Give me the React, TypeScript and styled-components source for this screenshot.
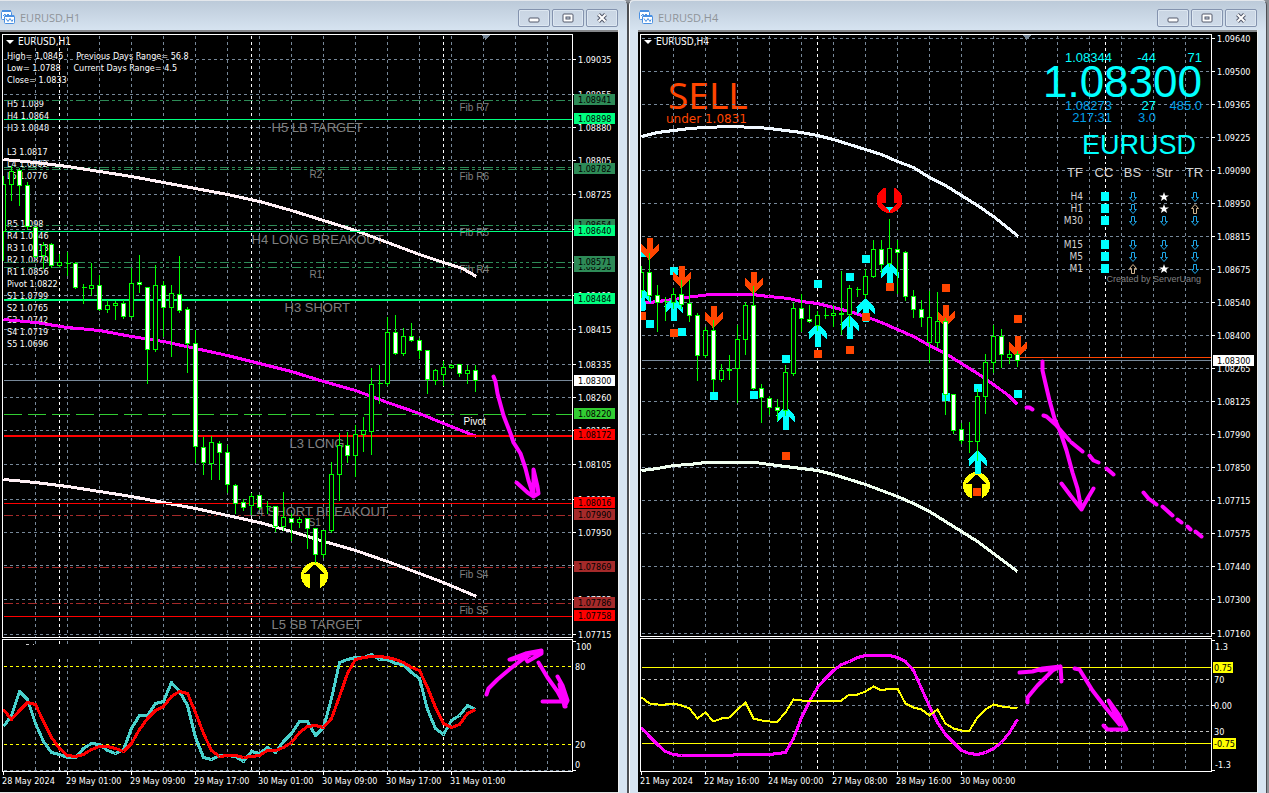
import React from 'react';
import styled, { createGlobalStyle } from 'styled-components';

const GlobalStyle = createGlobalStyle`
  *, *::before, *::after { box-sizing: border-box; }
  body { margin: 0; background: #8d9096; }
`;

const UI_FONT = '"DejaVu Sans Condensed", "DejaVu Sans", sans-serif';
const ARIAL = '"Liberation Sans", Arial, sans-serif';

const GRID = '#778899';
const MAGENTA = '#ff00ff';
const CYAN = '#00ffff';
const ORANGE = '#ff4500';
const SEA = '#2e8b57';
const SPRING = '#00ff7f';
const BROWN = '#a52a2a';
const LIME = '#00ff00';

/* ---------- layout ---------- */

const Desktop = styled.main`
  display: grid;
  grid-template-columns: 628fr 641fr;
  align-items: stretch;
  min-height: 100vh;
  font-family: ${UI_FONT};
`;

const Win = styled.section<{ $first?: boolean }>`
  min-width: 0;
  display: flex;
  flex-direction: column;
  background: #d7e4f1 linear-gradient(#bccad9, #d7e4f1 30px) no-repeat;
  border-top: 1px solid #e3e7ec;
  border-right: 1px solid #4c4e52;
  border-left: ${(p) => (p.$first ? '0' : '1px solid #4c4e52')};
  border-radius: ${(p) => (p.$first ? '0 5px 0 0' : '5px 5px 0 0')};
  padding-right: 9px;
  padding-left: ${(p) => (p.$first ? '0' : '9px')};
  box-shadow: ${(p) => (p.$first ? 'none' : 'inset 1px 0 0 #ffffff')};
  margin-right: ${(p) => (p.$first ? '0' : '2px')};
`;

const TitleBar = styled.header`
  display: flex;
  align-items: center;
  gap: 5px;
  height: 29px;
  padding: 4px 0 0 1px;
`;

const Title = styled.h1`
  flex: 1;
  margin: 0;
  font: 400 11px/16px "Open Sans", "Noto Sans", sans-serif;
  color: #8f9499;
`;

const WinButtons = styled.div`
  display: flex;
  gap: 2px;
`;

const WinButton = styled.button`
  width: 32px;
  height: 18px;
  padding: 0;
  display: grid;
  place-items: center;
  border: 1px solid #8493ae;
  border-radius: 2px;
  background: linear-gradient(#c9d5e3, #cfdbe9);
  box-shadow: inset 0 0 0 1px #dde7f1;
`;

const Client = styled.div`
  display: flex;
  flex-direction: column;
  flex: 1;
  background: #000;
  border-top: 2px solid #85878a;
  padding: 2px 0 0 2px;
  box-shadow: 1px 0 0 #f0f0f0;
  border-bottom: 1px solid #e6e6e6;
`;

const Pane = styled.div`
  display: flex;
  & + & { margin-top: 1px; }
`;

const Frame = styled.div`
  position: relative;
  flex: 1;
  min-width: 0;
  overflow: hidden;
  border: 1px solid #fff;
`;

const Drawing = styled.svg`
  position: relative;
  display: block;
  width: 100%;
`;

const AxisDrawing = styled.svg`
  display: block;
  flex: none;
  width: 45px;
  overflow: visible;
  font: 9px ${UI_FONT};
`;

const TimeAxis = styled.ol`
  display: flex;
  height: 20px;
  margin: 0;
  padding: 0;
  list-style: none;
  overflow: hidden;
  color: #fff;
  font-size: 9px;
  line-height: 12px;
`;

const TimeLabel = styled.li`
  flex: none;
  width: 64px;
  white-space: nowrap;
  &::before {
    content: '';
    display: block;
    width: 1px;
    height: 3px;
    margin-left: 1px;
    background: #fff;
  }
`;

/* ---------- overlays ---------- */

const InfoLayer = styled.div`
  position: absolute;
  top: 1px;
  left: 3px;
  color: #fff;
`;

const SymbolLine = styled.h2`
  display: flex;
  align-items: center;
  gap: 4px;
  margin: 0;
  font-size: 10px;
  line-height: 12px;
  font-weight: 400;
`;

const Caret = styled.span`
  border: 4px solid transparent;
  border-top-color: #fff;
  border-bottom: 0;
`;

const Readout = styled.pre`
  margin: 2px 0 0 1px;
  font: 9px/12px ${UI_FONT};
`;

const Signal = styled.div`
  margin: 29px 0 0 22px;
  color: ${ORANGE};
`;

const SignalWord = styled.div`
  padding-left: 2px;
  font: 37px/36px "Noto Sans", "Open Sans", sans-serif;
`;

const SignalNote = styled.div`
  font: 12px/12px "DejaVu Sans", sans-serif;
`;

const Dashboard = styled.aside`
  position: absolute;
  top: 17px;
  right: 4px;
  display: flex;
  flex-direction: column;
  align-items: flex-end;
  font-family: ${ARIAL};
  color: ${CYAN};
`;

const Quotes = styled.div<{ $color: string }>`
  display: grid;
  grid-template-columns: 49px 44px 46px;
  margin-right: 5px;
  text-align: right;
  font-size: 13px;
  line-height: 12px;
  color: ${(p) => p.$color};
`;

const Bright = styled.span`
  color: ${CYAN};
`;

const BigPrice = styled.div`
  margin-right: 5px;
  font-size: 44px;
  line-height: 36px;
`;

const Pair = styled.div`
  margin: 3px 11px 2px 0;
  font-size: 27px;
  line-height: 36px;
`;

const Matrix = styled.table`
  table-layout: fixed;
  width: 150px;
  border-collapse: collapse;
  color: #d3d3d3;
  text-align: center;
`;

const HeadCell = styled.th<{ $w: number; $label?: boolean }>`
  width: ${(p) => p.$w}px;
  height: 26px;
  padding: 0 ${(p) => (p.$label ? 6 : 0)}px 0 0;
  vertical-align: top;
  font-weight: 400;
  font-size: 13px;
  line-height: 16px;
  text-align: ${(p) => (p.$label ? 'right' : 'center')};
`;

const FrameName = styled.th`
  height: 12px;
  padding: 0 6px 0 0;
  font: 400 10px/12px ${UI_FONT};
  text-align: right;
`;

const MarkCell = styled.td`
  height: 12px;
  padding: 0;
  line-height: 0;
`;

const Credit = styled.div`
  margin-right: 6px;
  font-size: 9px;
  line-height: 8px;
  color: #808080;
`;

/* ---------- small drawings ---------- */

const ChartIcon = () => (
  <svg width="14" height="15" viewBox="0 0 14 15" aria-hidden="true">
    <g fill="#fff" stroke="#4a90e2">
      <rect x="0.5" y="1.5" width="10" height="8" rx="1" />
      <path d="M1 1h9" strokeWidth="2" />
      <path d="M2 6l2-2 1 2 2-2 1 1" fill="none" />
      <rect x="3.5" y="5.5" width="10" height="8" rx="1" />
      <path d="M4 6h9" strokeWidth="2" />
      <path d="M5 8.5l2 3 2-3 2 3 1-2" fill="none" />
    </g>
  </svg>
);

const glyphs = {
  Minimize: <rect x="1" y="5" width="10" height="4" rx="1" fill="#fff" stroke="#53586a" />,
  Restore: (
    <g fill="#fff" stroke="#53586a">
      <rect x="1" y="1" width="10" height="8" rx="1" />
      <rect x="4" y="4" width="4" height="2" fill="#cfdbe9" />
    </g>
  ),
  Close: (
    <g fill="none">
      <path d="M2.5 1.5l7 7m0-7l-7 7" stroke="#53586a" strokeWidth="4" />
      <path d="M2.5 1.5l7 7m0-7l-7 7" stroke="#fff" strokeWidth="2" />
    </g>
  ),
};

const HollowArrow = ({ up }: { up?: boolean }) => (
  <svg width="8" height="12" viewBox="0 0 8 12" aria-label={up ? 'up' : 'down'}>
    <path
      d="M2.5 1.5h3v5h2L4 10.500.500 6.500h2z"
      fill="#000"
      stroke={up ? '#d2b48c' : '#1ea7e8'}
      transform={up ? 'rotate(180 4 6)' : undefined}
    />
  </svg>
);

const Star = () => (
  <svg width="10" height="12" viewBox="0 0 10 12" aria-label="strong">
    <path d="M5 1l1.200 3.400H10L7 6.600 8.100 10 5 7.900 1.900 10 3 6.600 0 4.400h3.800z" fill="#fff" />
  </svg>
);

const Block = () => (
  <svg width="10" height="12" viewBox="0 0 10 12" aria-label="cyan">
    <rect x="2" y="1" width="8" height="9" fill={CYAN} />
  </svg>
);

/* ---------- chart parts; coordinates are whole pixels of the desktop ---------- */

type Pt = [number, number];
const pts = (list: Pt[]) => list.map((p) => p.join(',')).join(' ');
const series = (x0: number, ys: number[]): Pt[] => ys.map((y, i) => [x0 + 8 * i, y]);
const range = (from: number, to: number, step: number) => {
  const out: number[] = [];
  for (let v = from; v <= to; v += step) out.push(v);
  return out;
};

const Canvas = ({
  x,
  y,
  height,
  label,
  children,
}: {
  x: number;
  y: number;
  height: number;
  label: string;
  children: React.ReactNode;
}) => (
  <Drawing height={height} role="img" aria-label={label}>
    <g transform={`translate(${0.5 - x} ${0.5 - y})`} shapeRendering="crispEdges">
      {children}
    </g>
  </Drawing>
);

const VLines = ({ xs, y1, y2, color = GRID }: { xs: number[]; y1: number; y2: number; color?: string }) => (
  <g stroke={color} strokeDasharray="3 3">
    {xs.map((x) => (
      <line key={x} x1={x} x2={x} y1={y1} y2={y2} />
    ))}
  </g>
);

const HLine = ({
  y,
  x = 3,
  color = GRID,
  dash,
  width = 1,
}: {
  y: number;
  x?: number;
  color?: string;
  dash?: string;
  width?: number;
}) => <line x1={x} x2={4000} y1={y} y2={y} stroke={color} strokeDasharray={dash} strokeWidth={width} />;

const Line = ({ data, color, width = 3 }: { data: Pt[]; color: string; width?: number }) => (
  <polyline points={pts(data)} fill="none" stroke={color} strokeWidth={width} strokeLinejoin="round" />
);

const Marker = ({ d }: { d: string }) => (
  <path
    d={d}
    fill="none"
    stroke={MAGENTA}
    strokeWidth="4"
    strokeLinecap="round"
    strokeLinejoin="round"
    shapeRendering="auto"
  />
);

/* high, body top, body bottom, low, filled (1) or hollow (0) */
type Bar = [number, number, number, number, 0 | 1];

const Candles = ({ x0, bars }: { x0: number; bars: Bar[] }) => (
  <g stroke={LIME}>
    {bars.map(([h, t, b, l, f], i) => {
      const x = x0 + 8 * i;
      return (
        <g key={x}>
          <line x1={x} x2={x} y1={h} y2={l} />
          {b - t < 1 ? (
            <line x1={x - 2} x2={x + 3} y1={t} y2={t} />
          ) : (
            <rect x={x - 2} y={t} width="4" height={b - t} fill={f ? '#fff' : '#000'} />
          )}
        </g>
      );
    })}
  </g>
);

const Tag = ({ y, text, bg, fg = '#000', x = 1, w = 41, tx = 5 }: {
  y: number; text: string; bg: string; fg?: string; x?: number; w?: number; tx?: number;
}) => (
  <g>
    <rect x={x} y={y - 5} width={w} height="11" fill={bg} />
    <text x={tx} y={y + 4} fill={fg}>{text}</text>
  </g>
);

const Scale = ({ top, rows, x = 5 }: { top: number; rows: [number, string][]; x?: number }) => (
  <g>
    {rows.map(([y, text]) => (
      <g key={y}>
        <rect x="0" y={y - top} width="3" height="1" fill="#fff" />
        <text x={x} y={y - top + 4} fill="#fff">{text}</text>
      </g>
    ))}
  </g>
);

/* ---------- H1 data ---------- */

const h1Cols = range(35, 2000, 32);
const h1Days = [59, 251, 443];

const h1Scale: [number, string][] = [
  [59, '1.09035'], [94, '1.08955'], [127, '1.08880'], [160, '1.08805'], [194, '1.08725'],
  [229, '1.08645'], [262, '1.08570'], [295, '1.08490'], [329, '1.08415'], [364, '1.08335'],
  [397, '1.08260'], [430, '1.08185'], [464, '1.08105'], [499, '1.08025'], [532, '1.07950'],
  [565, '1.07875'], [599, '1.07795'], [634, '1.07715'],
];

const h1Tags: [number, string, string][] = [
  [99, '1.08941', SEA], [118, '1.08898', SPRING], [168, '1.08786', SEA], [168, '1.08782', SEA],
  [224, '1.08654', SEA], [230, '1.08640', SPRING], [266, '1.08558', SEA], [261, '1.08571', SEA],
  [298, '1.08484', SPRING], [380, '1.08300', '#fff'], [413, '1.08220', '#32cd32'],
  [434, '1.08172', '#ff0000'], [502, '1.08016', '#ff0000'], [514, '1.07990', BROWN],
  [566, '1.07869', BROWN], [602, '1.07786', BROWN], [615, '1.07758', '#ff0000'],
];

const h1Names: [number, number, string, number][] = [
  [459, 110, 'Fib R7', 10], [459, 179, 'Fib R6', 10], [459, 235, 'Fib R5', 10], [459, 272, 'Fib R4', 10],
  [309, 177, 'R2', 10], [309, 277, 'R1', 10], [308, 525, 'S1', 10], [459, 577, 'Fib S4', 10],
  [459, 613, 'Fib S5', 10], [271, 131, 'H5 LB TARGET', 13], [251, 243, 'H4 LONG BREAKOUT', 13],
  [284, 311, 'H3 SHORT', 13], [289, 447, 'L3 LONG', 13], [249, 515, 'L4 SHORT BREAKOUT', 13],
  [271, 628, 'L5 SB TARGET', 13],
];

const h1Upper: Pt[] = [
  [3, 159], [35, 162], [67, 166], [99, 171], [131, 176], [163, 182], [195, 188], [227, 194], [259, 201],
  [291, 210], [323, 220], [355, 230], [387, 242], [419, 254], [443, 262], [462, 268], [476, 276],
];
const h1Middle: Pt[] = [
  [3, 319], [35, 322], [67, 327], [99, 330], [131, 336], [163, 341], [195, 348], [227, 355], [259, 363],
  [291, 371], [323, 381], [355, 390], [387, 402], [419, 413], [443, 423], [476, 436],
];
const h1Lower: Pt[] = [
  [3, 479], [35, 482], [67, 486], [99, 491], [131, 496], [163, 502], [195, 508], [227, 515], [259, 522],
  [291, 531], [317, 539], [355, 550], [387, 561], [419, 573], [443, 582], [476, 596],
];

const h1Bars: Bar[] = [
  [175, 184, 231, 260, 0], [165, 171, 184, 200, 0], [167, 170, 185, 205, 1], [181, 185, 226, 229, 1],
  [226, 227, 256, 257, 1], [241, 245, 255, 268, 0], [242, 244, 265, 267, 1], [253, 262, 265, 266, 0],
  [251, 263, 263, 275, 0], [261, 263, 287, 288, 1], [283, 287, 287, 303, 0], [262, 285, 288, 295, 0],
  [274, 285, 309, 310, 1], [299, 305, 309, 312, 0], [300, 303, 305, 319, 0], [299, 303, 316, 318, 1],
  [267, 283, 316, 317, 0], [254, 282, 284, 292, 1], [286, 287, 349, 383, 1], [264, 285, 349, 351, 0],
  [280, 285, 307, 336, 1], [284, 293, 307, 356, 0], [255, 294, 310, 312, 1], [306, 309, 343, 372, 1],
  [329, 343, 446, 462, 1], [436, 447, 462, 474, 1], [435, 442, 463, 479, 0], [440, 443, 452, 479, 1],
  [444, 452, 484, 492, 1], [483, 485, 503, 513, 1], [498, 502, 507, 510, 1], [492, 496, 505, 514, 0],
  [494, 495, 507, 509, 1], [500, 506, 506, 513, 0], [505, 506, 526, 531, 1], [491, 517, 526, 530, 0],
  [512, 518, 522, 540, 1], [516, 519, 522, 527, 0], [517, 518, 528, 548, 1], [527, 528, 554, 562, 1],
  [529, 530, 554, 557, 0], [461, 474, 530, 532, 0], [432, 445, 474, 500, 0], [431, 445, 455, 462, 1],
  [424, 434, 455, 476, 0], [416, 430, 434, 451, 0], [367, 384, 431, 454, 0], [364, 383, 383, 403, 0],
  [316, 332, 383, 385, 0], [314, 332, 353, 354, 1], [327, 336, 353, 355, 0], [322, 336, 340, 341, 1],
  [337, 340, 350, 358, 1], [349, 350, 379, 393, 1], [368, 370, 380, 384, 0], [360, 367, 374, 385, 0],
  [363, 365, 367, 368, 0], [363, 364, 373, 376, 1], [364, 370, 373, 383, 0], [364, 370, 380, 391, 1],
];

const h1Fast = [
  726, 715, 691, 699, 723, 741, 752, 754, 757, 757, 748, 743, 744, 750, 753, 749, 728, 715, 715, 703,
  701, 682, 691, 705, 737, 757, 759, 755, 755, 756, 761, 751, 753, 747, 752, 741, 733, 721, 721, 735,
  727, 698, 662, 659, 657, 657, 654, 659, 659, 663, 664, 672, 678, 709, 728, 734, 720, 715, 705, 709,
];
const h1Slow = [
  709, 719, 710, 702, 704, 721, 737, 748, 755, 756, 754, 749, 746, 746, 748, 751, 743, 729, 718, 710,
  706, 696, 691, 693, 712, 733, 750, 756, 755, 755, 757, 756, 755, 750, 750, 747, 742, 732, 726, 725,
  727, 718, 696, 673, 659, 657, 656, 656, 657, 659, 662, 667, 670, 687, 707, 723, 727, 724, 713, 709,
];

const h1Readout = `High= 1.0845     Previous Days Range= 56.8
Low= 1.0788     Current Days Range= 4.5
Close= 1.0833

H5 1.089
H4 1.0864
H3 1.0848

L3 1.0817
L4 1.0802
L5 1.0776



R5 1.098
R4 1.0946
R3 1.0913
R2 1.0879
R1 1.0856
Pivot 1.0822
S1 1.0799
S2 1.0765
S3 1.0742
S4 1.0719
S5 1.0696`;

const DDD = '9 3 3 3 3 3';

const BuyBadge = ({ x, y }: { x: number; y: number }) => (
  <g transform={`translate(${x} ${y})`}>
    <path d="M-8 11A13.500 13.500 0 1 1 8 11L5 13H-5z" fill="#ffff00" />
    <path d="M-8 10L-5 13H5L8 10" fill="#ffff00" />
    <path d="M0-11L10-2H5V15H-5V-2H-10z" fill="#000" />
  </g>
);

const H1Chart = () => (
  <Canvas x={3} y={35} height={602} label="EURUSD H1 price chart">
    <VLines xs={h1Cols} y1={35} y2={640} />
    {h1Scale.map(([y]) => (
      <HLine key={y} y={y} dash="3 3" />
    ))}
    <VLines xs={h1Days} y1={35} y2={640} color="#fff" />
    <path d="M481 34h9l-4 5h-1z" fill={GRID} />
    {[100, 167, 169, 225, 262, 267].map((y) => (
      <HLine key={y} y={y} color={SEA} dash={DDD} />
    ))}
    {[515, 567, 603].map((y) => (
      <HLine key={y} y={y} color={BROWN} dash={DDD} />
    ))}
    <HLine y={380} />
    <HLine y={414} color="#32cd32" dash="18 6" />
    <g fontFamily={ARIAL} fill="#808080" shapeRendering="auto">
      {h1Names.map(([x, y, text, size]) => (
        <text key={text} x={x} y={y} fontSize={size}>{text}</text>
      ))}
      <text x="463" y="424" fontSize="10" fill="#fff">Pivot</text>
    </g>
    <Line data={h1Upper} color="#fff0f5" />
    <Line data={h1Middle} color={MAGENTA} />
    <Line data={h1Lower} color="#fff0f5" />
    <HLine y={119} color={SPRING} />
    <HLine y={231} color={SPRING} />
    <rect x="3" y="298" width="4000" height="2" fill={SPRING} />
    <rect x="3" y="434" width="4000" height="2" fill="#ff0000" />
    <HLine y={503} color="#ff0000" />
    <HLine y={616} color="#ff0000" />
    <BuyBadge x={314} y={575} />
    <Candles x0={3} bars={h1Bars} />
    <Marker d="M493 376L495 381 497 393 503 415 510 433 513 442 520 453 525 468 528 480 533 495M516 482L527 492 533 496 538 493 537 486 533 469 533 494" />
  </Canvas>
);

const H1Osc = () => (
  <Canvas x={3} y={640} height={131} label="Stochastic oscillator">
    <VLines xs={h1Cols} y1={640} y2={771} />
    <VLines xs={h1Days} y1={640} y2={771} color="#fff" />
    <rect x="3" y="643" width="128" height="14" fill="#000" />
    <path d="M25 644h3m4 0h1" stroke="#ccc" />
    <HLine y={770} dash="3 3" />
    <HLine y={666} color="#ffff00" dash="3 3" />
    <HLine y={744} color="#ffff00" dash="3 3" />
    <Line data={series(3, h1Fast)} color="#48d1cc" />
    <Line data={series(3, h1Slow)} color="#ff0000" />
    <Marker d="M486 694L488 688 497 679 510 668 523 658 530 654M509 659L525 653 541 650 541 653 527 661 524 656 511 659M524 654L540 652M538 662L547 677 557 691 565 706M557 676L562 685 567 700 564 706 559 684M542 701L565 701" />
  </Canvas>
);

/* ---------- H4 data ---------- */

const h4Cols = range(673, 2600, 32);
const h4Days = [817, 1105];
const h4Scale: [number, string][] = [
  [38, '1.09640'], [71, '1.09500'], [104, '1.09365'], [137, '1.09225'], [170, '1.09090'],
  [203, '1.08950'], [236, '1.08815'], [269, '1.08675'], [302, '1.08540'], [335, '1.08400'],
  [368, '1.08265'], [401, '1.08125'], [434, '1.07990'], [467, '1.07850'], [500, '1.07715'],
  [533, '1.07575'], [566, '1.07440'], [599, '1.07300'], [633, '1.07160'],
];

const h4Upper: Pt[] = [
  [641, 136], [657, 132], [673, 130], [689, 128], [705, 127], [729, 126], [757, 127], [769, 128],
  [785, 130], [801, 132], [817, 135], [833, 139], [849, 144], [865, 149], [881, 154], [897, 161],
  [913, 167], [929, 177], [945, 185], [961, 195], [977, 205], [993, 216], [1018, 236],
];
const h4Middle: Pt[] = [
  [641, 303], [657, 301], [673, 299], [693, 296], [710, 294], [752, 294], [768, 296], [788, 298],
  [801, 301], [817, 303], [833, 307], [849, 311], [865, 316], [881, 322], [897, 329], [913, 336],
  [929, 345], [945, 353], [961, 363], [977, 373], [993, 384], [1008, 395], [1017, 404],
];
const h4Lower: Pt[] = [
  [641, 470], [657, 468], [673, 465], [689, 464], [705, 462], [755, 462], [769, 464], [785, 466],
  [801, 468], [817, 470], [833, 474], [849, 479], [865, 484], [881, 490], [897, 496], [913, 503],
  [929, 511], [945, 521], [961, 531], [977, 541], [993, 553], [1017, 571],
];

const h4Bars: Bar[] = [
  [265, 272, 290, 297, 0], [252, 272, 295, 300, 1], [284, 295, 302, 331, 1], [296, 301, 301, 320, 0],
  [287, 294, 302, 308, 0], [279, 294, 304, 308, 1], [279, 303, 315, 321, 1], [312, 315, 355, 380, 1],
  [326, 330, 355, 357, 0], [319, 330, 379, 391, 1], [363, 370, 379, 381, 0], [354, 369, 370, 379, 0],
  [324, 339, 368, 402, 0], [301, 305, 339, 354, 0], [285, 305, 388, 389, 1], [383, 388, 397, 422, 1],
  [395, 398, 407, 414, 1], [398, 407, 410, 420, 1], [364, 372, 410, 415, 0], [302, 308, 373, 375, 0],
  [293, 308, 318, 331, 1], [304, 319, 321, 322, 1], [310, 315, 325, 330, 0], [307, 315, 315, 318, 0],
  [304, 313, 315, 326, 0], [270, 313, 314, 334, 0], [284, 288, 314, 326, 0], [286, 289, 289, 296, 0],
  [268, 276, 294, 298, 0], [239, 249, 276, 277, 0], [239, 249, 264, 272, 1], [218, 248, 263, 266, 0],
  [239, 249, 252, 293, 1], [250, 252, 296, 300, 1], [289, 296, 309, 317, 1], [299, 309, 317, 326, 1],
  [290, 317, 342, 362, 0], [291, 321, 342, 347, 0], [317, 321, 394, 414, 1], [393, 394, 430, 433, 1],
  [422, 429, 440, 443, 1], [421, 441, 441, 452, 0], [388, 396, 441, 460, 0], [353, 362, 396, 413, 0],
  [324, 336, 362, 372, 0], [328, 336, 354, 367, 1], [349, 354, 357, 363, 0], [350, 354, 360, 366, 1],
];

const h4Downs: Pt[] = [[649, 259], [681, 287], [713, 327], [753, 293], [945, 326], [1017, 357]];
const h4Ups: Pt[] = [
  [641, 287], [673, 297], [785, 406], [817, 323], [849, 315], [865, 298], [889, 262], [977, 450],
];
const h4CyanDots: Pt[] = [
  [641, 252], [641, 305], [673, 270], [649, 323], [681, 331], [713, 395], [753, 394], [785, 358],
  [817, 283], [849, 276], [865, 258], [945, 396], [977, 387], [1017, 393],
];
const h4OrangeDots: Pt[] = [
  [641, 315], [673, 332], [785, 455], [817, 353], [849, 349], [865, 316], [889, 286], [945, 287], [1017, 318],
];

const ARROW_DOWN = 'M-3-22H3V-10L9-16V-9L1 0H-1L-9-9V-16L-3-10z';
const ARROW_UP = 'M-3 23H3V10L9 16V9L1 0H-1L-9 9V16L-3 10z';

const h4Trend = [
  727, 736, 744, 751, 754, 755, 755, 755, 755, 755, 755, 755, 754, 754, 754, 754, 754, 753, 752, 738,
  717, 701, 687, 678, 670, 664, 661, 657, 655, 655, 655, 655, 657, 661, 670, 688, 706, 722, 734, 742,
  750, 753, 754, 752, 748, 742, 732, 719,
];
const h4Momentum = [
  697, 703, 704, 704, 703, 705, 708, 718, 712, 721, 718, 717, 709, 702, 718, 720, 721, 721, 712, 699,
  700, 701, 700, 700, 700, 700, 694, 694, 691, 686, 690, 688, 688, 703, 707, 709, 715, 709, 723, 728,
  730, 730, 717, 709, 704, 706, 707, 708,
];

const Dots = ({ data, color }: { data: Pt[]; color: string }) => (
  <g fill={color}>
    {data.map(([x, y]) => (
      <rect key={`${x}-${y}`} x={x - 4} y={y - 4} width="8" height="8" />
    ))}
  </g>
);

const H4Chart = () => (
  <Canvas x={641} y={35} height={601} label="EURUSD H4 price chart">
    <VLines xs={h4Cols} y1={35} y2={640} />
    {h4Scale.map(([y]) => (
      <HLine key={y} x={641} y={y} dash="3 3" />
    ))}
    <VLines xs={h4Days} y1={35} y2={640} color="#fff" />
    <path d="M1022 34h9l-4 5h-1z" fill={GRID} />
    <HLine x={641} y={360} />
    <HLine x={1017} y={357} color={ORANGE} />
    <Line data={h4Upper} color="#f0f8ff" />
    <Line data={h4Middle} color={MAGENTA} />
    <Line data={h4Lower} color="#f0fff0" />
    <path d="M885 187A13 13 0 1 0 893 187V202H885z" fill="#ff0000" />
    <path d="M885 186H893V202H897L889 211 881 202H885z" fill="#000" />
    <path d="M884 206H893L889 211z" fill={CYAN} />
    <BuyBadge x={976} y={485} />
    <rect x="972" y="487" width="8" height="8" fill={ORANGE} />
    <Dots data={h4CyanDots} color={CYAN} />
    {h4Ups.map(([x, y]) => (
      <path key={x} d={ARROW_UP} transform={`translate(${x} ${y})`} fill={CYAN} />
    ))}
    {h4Downs.map(([x, y]) => (
      <path key={x} d={ARROW_DOWN} transform={`translate(${x} ${y})`} fill={ORANGE} />
    ))}
    <Dots data={h4OrangeDots} color={ORANGE} />
    <Candles x0={641} bars={h4Bars} />
    <Marker d="M1042 361L1042 370 1045 383 1049 400 1054 418 1060 432 1066 450 1072 472 1077 488 1081 509M1061 483L1070 495 1081 509 1087 498 1093 488M1026 407L1029 407 1032 409M1043 415L1046 416 1055 424 1069 440M1071 442L1082 451M1089 455L1093 460 1098 462M1106 468L1113 474M1143 492L1148 498 1156 504M1162 506L1172 515M1177 519L1181 522M1187 526L1190 529M1195 531L1201 536" />
  </Canvas>
);

const H4Osc = () => (
  <Canvas x={641} y={639} height={132} label="Trend oscillator">
    <VLines xs={h4Cols} y1={639} y2={771} />
    <VLines xs={h4Days} y1={639} y2={771} color="#fff" />
    <rect x="641" y="643" width="120" height="9" fill="#000" />
    <HLine x={641} y={705} dash="3 3" />
    <HLine x={641} y={679} color="#c0c0c0" dash="3 3" />
    <HLine x={641} y={731} color="#c0c0c0" dash="3 3" />
    <HLine x={641} y={667} color="#ffff00" />
    <HLine x={641} y={743} color="#ffff00" />
    <Line data={series(641, h4Trend)} color={MAGENTA} />
    <Line data={series(641, h4Momentum)} color="#ffff00" width={2} />
    <Marker d="M1027 702L1027 697 1037 685 1052 670 1060 666M1019 672L1032 671 1042 668 1060 666 1061 681M1040 670L1052 668M1074 668L1079 669 1092 690 1105 707 1119 724 1115 714 1108 700 1118 714 1126 729 1107 729 1103 725M1112 708L1121 722" />
  </Canvas>
);

/* ---------- dashboard ---------- */

type Mark = 'up' | 'down' | 'star';
const marks: Record<Mark, React.ReactNode> = {
  up: <HollowArrow up />,
  down: <HollowArrow />,
  star: <Star />,
};

const frames: ([string, Mark, Mark, Mark] | null)[] = [
  ['H4', 'down', 'star', 'down'],
  ['H1', 'down', 'star', 'up'],
  ['M30', 'down', 'down', 'down'],
  null,
  ['M15', 'down', 'down', 'down'],
  ['M5', 'down', 'down', 'down'],
  ['M1', 'up', 'star', 'down'],
];

const QuoteBoard = () => (
  <Dashboard>
    <Quotes $color={CYAN}>
      <span>1.08344</span>
      <span>-44</span>
      <span>71</span>
    </Quotes>
    <BigPrice>1.08300</BigPrice>
    <Quotes $color="#009fe8">
      <span>1.08273</span>
      <Bright>27</Bright>
      <span>485.0</span>
      <span>217:31</span>
      <span>3.0</span>
    </Quotes>
    <Pair>EURUSD</Pair>
    <Matrix>
      <thead>
        <tr>
          <HeadCell $w={32} $label>TF</HeadCell>
          <HeadCell $w={30}>CC</HeadCell>
          <HeadCell $w={27}>BS</HeadCell>
          <HeadCell $w={36}>Str</HeadCell>
          <HeadCell $w={25}>TR</HeadCell>
        </tr>
      </thead>
      <tbody>
        {frames.map((row, i) =>
          row ? (
            <tr key={i}>
              <FrameName scope="row">{row[0]}</FrameName>
              <MarkCell><Block /></MarkCell>
              <MarkCell>{marks[row[1]]}</MarkCell>
              <MarkCell>{marks[row[2]]}</MarkCell>
              <MarkCell>{marks[row[3]]}</MarkCell>
            </tr>
          ) : (
            <tr key={i}>
              <MarkCell colSpan={5} />
            </tr>
          ),
        )}
      </tbody>
    </Matrix>
    <Credit>Created by ServerUang</Credit>
  </Dashboard>
);

/* ---------- windows ---------- */

const ChartWindow = ({
  title,
  first,
  times,
  children,
}: {
  title: string;
  first?: boolean;
  times: string[];
  children: React.ReactNode;
}) => (
  <Win $first={first}>
    <TitleBar>
      <ChartIcon />
      <Title>{title}</Title>
      <WinButtons>
        {Object.entries(glyphs).map(([name, glyph]) => (
          <WinButton key={name} type="button" aria-label={name}>
            <svg width="12" height="10" viewBox="0 0 12 10" aria-hidden="true">{glyph}</svg>
          </WinButton>
        ))}
      </WinButtons>
    </TitleBar>
    <Client>
      {children}
      <TimeAxis>
        {times.map((t) => (
          <TimeLabel key={t}>{t}</TimeLabel>
        ))}
      </TimeAxis>
    </Client>
  </Win>
);

export default function App() {
  return (
    <>
      <GlobalStyle />
      <Desktop>
        <ChartWindow
          title="EURUSD,H1"
          first
          times={[
            '28 May 2024', '29 May 01:00', '29 May 09:00', '29 May 17:00',
            '30 May 01:00', '30 May 09:00', '30 May 17:00', '31 May 01:00',
          ]}
        >
          <Pane>
            <Frame>
              <InfoLayer>
                <SymbolLine><Caret />EURUSD,H1</SymbolLine>
                <Readout>{h1Readout}</Readout>
              </InfoLayer>
              <H1Chart />
            </Frame>
            <AxisDrawing height={604}>
              <Scale top={34} rows={h1Scale} />
              {h1Tags.map(([y, text, bg]) => (
                <Tag key={text} y={y - 34} text={text} bg={bg} />
              ))}
            </AxisDrawing>
          </Pane>
          <Pane>
            <Frame><H1Osc /></Frame>
            <AxisDrawing height={133} fill="#fff">
              <rect x="0" y="2" width="3" height="1" />
              <rect x="0" y="131" width="3" height="1" />
              <text x="3" y="11">100</text>
              <text x="2" y="31">80</text>
              <text x="2" y="109">20</text>
              <text x="2" y="129">0</text>
            </AxisDrawing>
          </Pane>
        </ChartWindow>
        <ChartWindow
          title="EURUSD,H4"
          times={[
            '21 May 2024', '22 May 16:00', '24 May 00:00', '27 May 08:00', '28 May 16:00', '30 May 00:00',
          ]}
        >
          <Pane>
            <Frame>
              <InfoLayer>
                <SymbolLine><Caret />EURUSD,H4</SymbolLine>
                <Signal>
                  <SignalWord>SELL</SignalWord>
                  <SignalNote>under 1.0831</SignalNote>
                </Signal>
              </InfoLayer>
              <H4Chart />
              <QuoteBoard />
            </Frame>
            <AxisDrawing height={603}>
              <Scale top={34} rows={h4Scale} />
              <Tag y={326} text="1.08300" bg="#fff" />
            </AxisDrawing>
          </Pane>
          <Pane>
            <Frame><H4Osc /></Frame>
            <AxisDrawing height={134} fill="#fff">
              <rect x="0" y="2" width="3" height="1" />
              <rect x="0" y="67" width="3" height="1" />
              <rect x="0" y="132" width="3" height="1" />
              <text x="3" y="12">1.3</text>
              <Tag y={29} text="0.75" bg="#ffff00" w={20} tx={2} />
              <text x="2" y="45">70</text>
              <text x="2" y="71">0.00</text>
              <text x="2" y="97">30</text>
              <Tag y={105} text="-0.75" bg="#ffff00" w={23} tx={2} />
              <text x="3" y="130">-1.3</text>
            </AxisDrawing>
          </Pane>
        </ChartWindow>
      </Desktop>
    </>
  );
}
